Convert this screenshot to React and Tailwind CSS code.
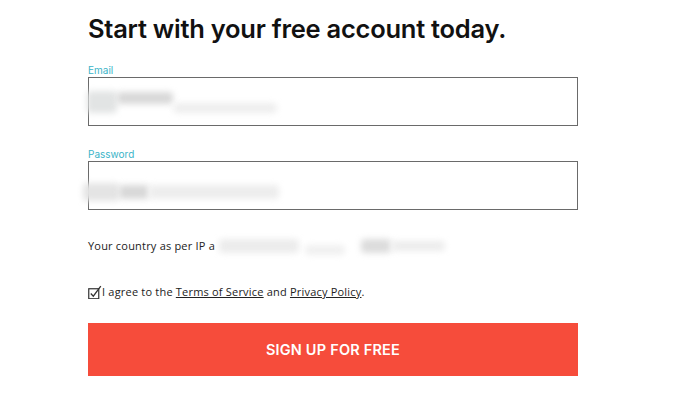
// redacted bits in the screenshot, drawn as soft grey smudges in flow
const Smudge = ({ className }) => <span className={`block rounded-sm blur-[3px] ${className}`} />;

const CheckIcon = () => (
  <svg width="14" height="14" viewBox="0 0 14 14" className="shrink-0">
    <rect x="0.75" y="3.75" width="10" height="10" fill="none" stroke="#333" strokeWidth="1.2" />
    <path d="M2.8 8.5 L5.3 11.2 L12.8 1.2" fill="none" stroke="#333" strokeWidth="1.3" />
  </svg>
);

const Field = ({ label, children }) => (
  <div className="flex flex-col">
    <label className="text-[10px] leading-[12px] text-[#3bb4c8] mb-[1px]">{label}</label>
    <div className="h-[49px] border border-[#6a6a6a] bg-white flex flex-col justify-center">{children}</div>
  </div>
);

export default function App() {
  return (
    <div className="w-[691px] h-[400px] bg-white overflow-hidden font-['Inter',sans-serif] text-[#1a1a1a]">
      <div className="w-[490px] ml-[88px] pt-[13px] flex flex-col">
        <h1 className="text-[25.5px] leading-[32px] font-semibold tracking-[-0.25px] text-[#111]">
          Start with your free account today.
        </h1>

        <div className="mt-[19px] flex flex-col gap-[22px]">
          <Field label="Email">
            <div className="flex items-end -ml-[2px]">
              <Smudge className="w-[30px] h-[22px] bg-[#e2e4e4]" />
              <Smudge className="w-[56px] h-[12px] mb-[9px] bg-[#d8d8d8]" />
              <Smudge className="w-[104px] h-[10px] bg-[#eeeeee]" />
            </div>
          </Field>
          <Field label="Password">
            <div className="flex items-center mt-[12px] -ml-[6px]">
              <Smudge className="w-[36px] h-[18px] bg-[#e4e4e4]" />
              <Smudge className="w-[30px] h-[14px] bg-[#d8d8d8]" />
              <Smudge className="w-[130px] h-[14px] bg-[#ededed]" />
            </div>
          </Field>
        </div>

        <div className="mt-[27px] flex items-center text-[11px] leading-[14px] tracking-[0.2px] font-['Open_Sans',sans-serif] text-[#222]">
          <span>Your country as per IP a</span>
          <Smudge className="ml-[4px] w-[80px] h-[14px] bg-[#ececec]" />
          <Smudge className="ml-[6px] w-[40px] h-[10px] mt-[8px] bg-[#f0f0f0]" />
          <Smudge className="ml-[16px] w-[30px] h-[14px] bg-[#dcdcdc]" />
          <Smudge className="w-[54px] h-[10px] bg-[#ececec]" />
        </div>

        <div className="mt-[30px] flex items-center text-[11px] leading-[14px] tracking-[0.2px] font-['Open_Sans',sans-serif] text-[#222]">
          <CheckIcon />
          <span>
            I agree to the <span className="underline">Terms of Service</span> and{' '}
            <span className="underline">Privacy Policy</span>.
          </span>
        </div>

        <button className="mt-[24px] h-[53px] w-full bg-[#f64c3b] text-white text-[14.5px] font-semibold tracking-[0.2px]">
          SIGN UP FOR FREE
        </button>
      </div>
    </div>
  );
}
